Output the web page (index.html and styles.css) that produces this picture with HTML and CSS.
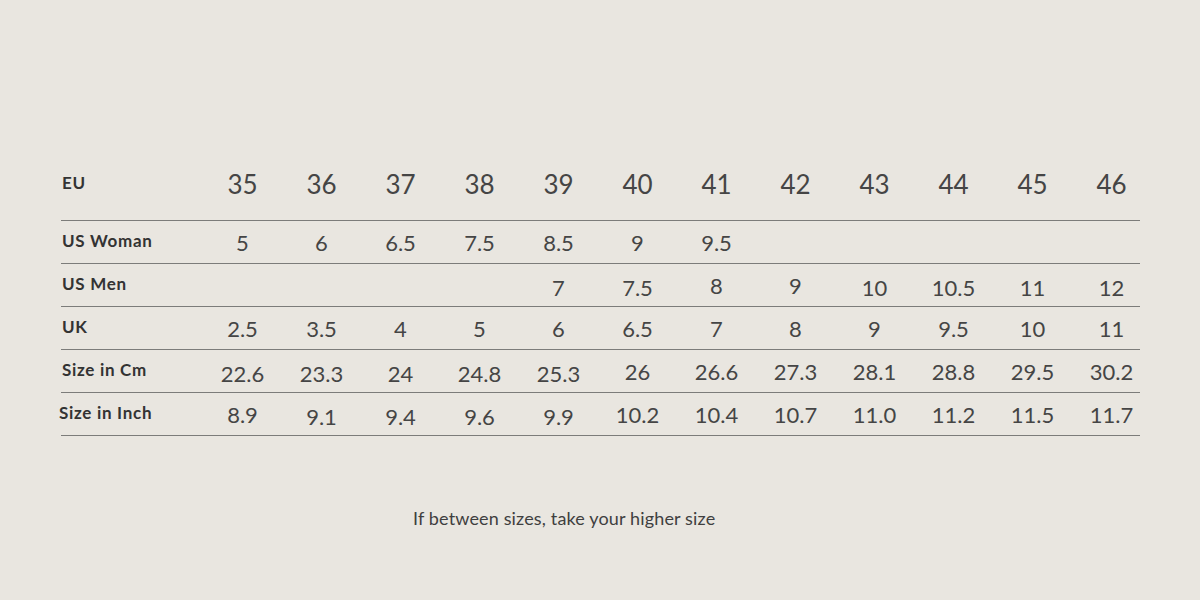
FILE: index.html
```html
<!DOCTYPE html>
<html>
<head>
<meta charset="utf-8">
<link rel="stylesheet" href="styles.css">
</head>
<body>
<main class="page">
  <section class="chart">
    <div class="row row-head">
      <div class="label">EU</div>
      <div class="cell">35</div><div class="cell">36</div><div class="cell">37</div><div class="cell">38</div>
      <div class="cell">39</div><div class="cell">40</div><div class="cell">41</div><div class="cell">42</div>
      <div class="cell">43</div><div class="cell">44</div><div class="cell">45</div><div class="cell">46</div>
    </div>
    <div class="row">
      <div class="label">US Woman</div>
      <div class="cell">5</div><div class="cell">6</div><div class="cell">6.5</div><div class="cell">7.5</div>
      <div class="cell">8.5</div><div class="cell">9</div><div class="cell">9.5</div><div class="cell"></div>
      <div class="cell"></div><div class="cell"></div><div class="cell"></div><div class="cell"></div>
    </div>
    <div class="row">
      <div class="label">US Men</div>
      <div class="cell"></div><div class="cell"></div><div class="cell"></div><div class="cell"></div>
      <div class="cell low">7</div><div class="cell low">7.5</div><div class="cell">8</div><div class="cell">9</div>
      <div class="cell low">10</div><div class="cell low">10.5</div><div class="cell low">11</div><div class="cell low">12</div>
    </div>
    <div class="row">
      <div class="label">UK</div>
      <div class="cell">2.5</div><div class="cell">3.5</div><div class="cell">4</div><div class="cell">5</div>
      <div class="cell">6</div><div class="cell">6.5</div><div class="cell">7</div><div class="cell">8</div>
      <div class="cell">9</div><div class="cell">9.5</div><div class="cell">10</div><div class="cell">11</div>
    </div>
    <div class="row">
      <div class="label">Size in Cm</div>
      <div class="cell low">22.6</div><div class="cell low">23.3</div><div class="cell low">24</div><div class="cell low">24.8</div>
      <div class="cell low">25.3</div><div class="cell">26</div><div class="cell">26.6</div><div class="cell">27.3</div>
      <div class="cell">28.1</div><div class="cell">28.8</div><div class="cell">29.5</div><div class="cell">30.2</div>
    </div>
    <div class="row">
      <div class="label label-shift">Size in Inch</div>
      <div class="cell">8.9</div><div class="cell low">9.1</div><div class="cell low">9.4</div><div class="cell low">9.6</div>
      <div class="cell low">9.9</div><div class="cell">10.2</div><div class="cell">10.4</div><div class="cell">10.7</div>
      <div class="cell">11.0</div><div class="cell">11.2</div><div class="cell">11.5</div><div class="cell">11.7</div>
    </div>
  </section>
  <p class="note">If between sizes, take your higher size</p>
</main>
</body>
</html>
```
FILE: styles.css
```css
html, body {
  margin: 0;
  padding: 0;
  background: #e9e6e0;
}
body {
  width: 1200px;
  height: 600px;
  overflow: hidden;
  font-family: Lato, "Open Sans", sans-serif;
  color: #3b3b3b;
}
.page {
  padding: 147px 0 0 61px;
}
.chart {
  width: 1079px;
}
.row {
  display: grid;
  grid-template-columns: 142px repeat(12, 79px);
  height: 42px;
  align-items: center;
  border-bottom: 1px solid #7c7c7a;
  box-sizing: content-box;
}
.row-head {
  height: 73px;
}
.label {
  font-weight: 700;
  font-size: 17px;
  letter-spacing: 0.7px;
  color: #333;
  padding-left: 1px;
  margin-top: -3px;
}
.label-shift {
  margin-left: -3px;
}
.cell {
  text-align: center;
  font-weight: 400;
  font-size: 22px;
  color: #454545;
}
.row-head .cell {
  font-size: 26px;
}
.low {
  padding-top: 4px;
}
.note {
  margin: 71px 0 0 0;
  padding-left: 352px;
  font-size: 18px;
  letter-spacing: 0.15px;
  font-weight: 400;
  color: #3f3f3f;
}
```
